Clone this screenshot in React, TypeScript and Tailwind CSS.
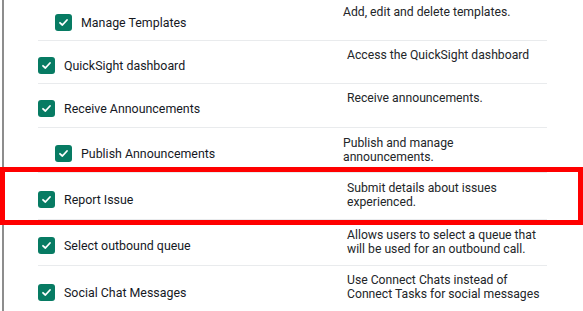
import React from 'react'

type Row = {
  label: string
  desc: string[]
  nested?: boolean
  h: string
  descPt: string
  labelPt: string
}

const ROWS: Row[] = [
  { label: 'Manage Templates', desc: ['Add, edit and delete templates.'], nested: true, h: 'h-[41px]', descPt: 'pt-[5px]', labelPt: 'pt-[14px]' },
  { label: 'QuickSight dashboard', desc: ['Access the QuickSight dashboard'], h: 'h-[43px]', descPt: 'pt-[7px]', labelPt: 'pt-[16px]' },
  { label: 'Receive Announcements', desc: ['Receive announcements.'], h: 'h-[44px]', descPt: 'pt-[7px]', labelPt: 'pt-[16px]' },
  { label: 'Publish Announcements', desc: ['Publish and manage', 'announcements.'], nested: true, h: 'h-[45px]', descPt: 'pt-[8px]', labelPt: 'pt-[17px]' },
  { label: 'Report Issue', desc: ['Submit details about issues', 'experienced.'], h: 'h-[47px]', descPt: 'pt-[8px]', labelPt: 'pt-[18px]' },
  { label: 'Select outbound queue', desc: ['Allows users to select a queue that', 'will be used for an outbound call.'], h: 'h-[46px]', descPt: 'pt-[8px]', labelPt: 'pt-[17px]' },
  { label: 'Social Chat Messages', desc: ['Use Connect Chats instead of', 'Connect Tasks for social messages'], h: 'h-[46px]', descPt: 'pt-[7px]', labelPt: 'pt-[18px]' },
]

function Check() {
  return (
    <span className="flex h-[17px] w-[17px] shrink-0 items-center justify-center rounded-[3px] bg-[#077b63]">
      <svg width="11" height="11" viewBox="0 0 11 11" fill="none">
        <polyline points="2,5.8 4.4,8 9,3" stroke="white" strokeWidth="1.8" strokeLinecap="round" strokeLinejoin="round" />
      </svg>
    </span>
  )
}

export default function App() {
  return (
    <div
      className="relative h-[311px] w-[583px] overflow-hidden bg-white text-[12.4px] text-[#16191f]"
      style={{ fontFamily: 'Roboto, "Liberation Sans", sans-serif' }}
    >
      <div className="ml-[2px] h-full border-l-2 border-[#8d8d8d] pl-[34px]">
        <div className="w-[509px]">
          {ROWS.map((r, i) => (
            <div
              key={r.label}
              className={`flex ${r.h} ${i < ROWS.length - 1 ? 'border-b border-[#e9ebed]' : ''}`}
            >
              <div className={`flex w-[305px] shrink-0 items-start gap-[9px] ${r.labelPt} ${r.nested ? 'pl-[17px]' : ''}`}>
                <Check />
                <span className="leading-[17px]">{r.label}</span>
              </div>
              <div className={`flex-1 text-[12.2px] leading-[14px] text-[#232629] ${r.descPt} ${r.nested ? 'pl-0' : 'pl-[4px]'}`}>
                {r.desc.map(d => (
                  <div key={d}>{d}</div>
                ))}
              </div>
            </div>
          ))}
        </div>
      </div>

      {/* highlight annotation */}
      <div className="pointer-events-none absolute left-0 top-[167px] h-[58px] w-[583px] border-[5px] border-[#ff0000]" />
    </div>
  )
}
